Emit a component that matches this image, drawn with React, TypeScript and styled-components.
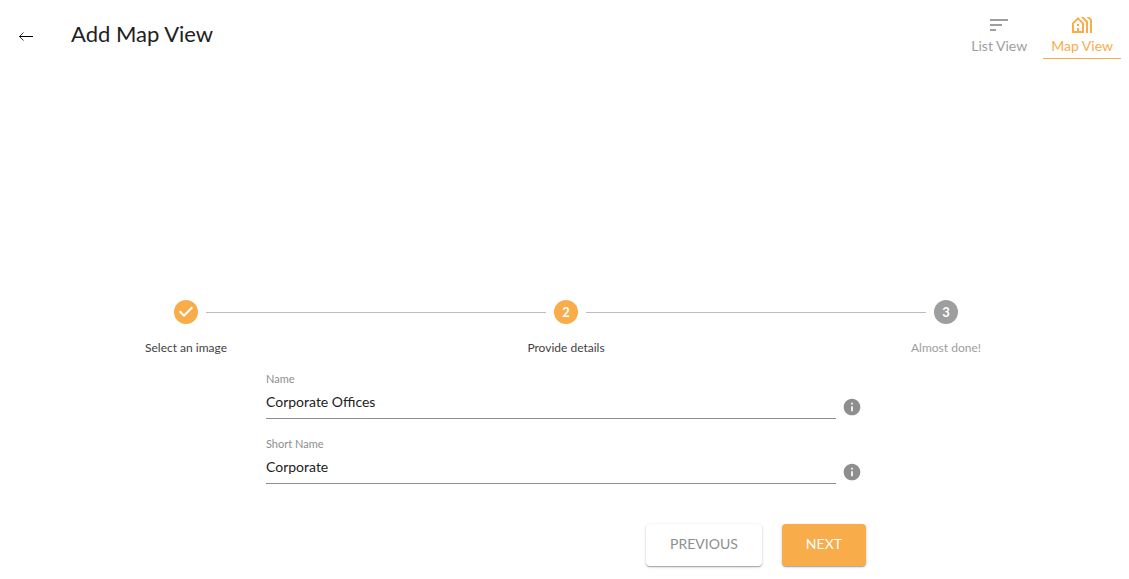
import React from 'react';
import styled, { createGlobalStyle } from 'styled-components';
import { MdSort, MdOutlineHolidayVillage, MdInfo } from 'react-icons/md';

const ORANGE = '#f9ad4a';
const GREY = '#9e9e9e';

const GlobalStyle = createGlobalStyle`
  *, *::before, *::after { box-sizing: border-box; }
  body {
    margin: 0;
    background: #fff;
    color: #212121;
    font-family: Lato, "Liberation Sans", sans-serif;
    overflow-x: hidden;
  }
  button, input { font: inherit; }
`;

const Page = styled.div`
  overflow: hidden;
`;

const Header = styled.header`
  display: flex;
  align-items: flex-start;
  height: 300px;
  padding: 8px 8px 0 8px;
`;

const BackButton = styled.button`
  display: flex;
  align-items: center;
  justify-content: center;
  width: 36px;
  height: 36px;
  margin-top: 10px;
  padding: 0;
  border: 0;
  background: none;
  color: #000;
  cursor: pointer;
`;

const Title = styled.h1`
  flex: 1;
  margin: 10px 0 0 27px;
  font-size: 22px;
  font-weight: 400;
  line-height: 32px;
  color: #212121;
`;

const Tabs = styled.nav`
  display: flex;
  gap: 8px;
`;

const Tab = styled.a<{ $active?: boolean }>`
  display: flex;
  flex-direction: column;
  align-items: center;
  height: 51px;
  padding: 5px 8px 0;
  border-bottom: 1px solid ${(p) => (p.$active ? ORANGE : 'transparent')};
  color: ${(p) => (p.$active ? ORANGE : GREY)};
  font-size: 14px;
  line-height: 18px;
  text-decoration: none;

  svg { display: block; }
`;

const Main = styled.main`
  padding-left: 3px;
`;

const Stepper = styled.ol`
  display: grid;
  grid-template-columns: repeat(3, 1fr);
  margin: 0 -7px;
  padding: 0;
  list-style: none;
`;

const Step = styled.li`
  display: flex;
  flex-direction: column;
  gap: 16px;
`;

const StepTrack = styled.div`
  display: flex;
  align-items: center;
  gap: 8px;
`;

const Connector = styled.span<{ $hidden?: boolean }>`
  flex: 1;
  height: 1px;
  background: ${(p) => (p.$hidden ? 'transparent' : '#bdbdbd')};
`;

const StepBadge = styled.span<{ $done?: boolean }>`
  display: flex;
  align-items: center;
  justify-content: center;
  width: 24px;
  height: 24px;
  border-radius: 50%;
  background: ${(p) => (p.$done ? ORANGE : GREY)};
  color: #fff;
  font-size: 13px;
  font-weight: 700;
  line-height: 24px;
`;

const StepLabel = styled.span<{ $muted?: boolean }>`
  font-size: 12px;
  line-height: 16px;
  text-align: center;
  color: ${(p) => (p.$muted ? GREY : '#424242')};
`;

const Form = styled.form`
  width: 100%;
  max-width: 600px;
  margin: 0 auto;
  padding-top: 16px;
`;

const FieldRow = styled.div`
  display: flex;
  align-items: flex-end;
  gap: 6px;
  margin-bottom: 18px;
`;

const Field = styled.div`
  display: flex;
  flex: 1;
  flex-direction: column;
`;

const Label = styled.label`
  font-size: 11px;
  line-height: 14px;
  color: #8e8e8e;
`;

const Input = styled.input`
  width: 100%;
  height: 33px;
  padding: 0 0 1px;
  border: 0;
  border-bottom: 1px solid #8e8e8e;
  border-radius: 0;
  outline: 0;
  background: none;
  color: #212121;
  font-size: 14px;
`;

const InfoButton = styled.button`
  display: flex;
  width: 24px;
  height: 20px;
  margin-bottom: 2px;
  padding: 0;
  border: 0;
  background: none;
  color: #8e8e8e;
`;

const Actions = styled.div`
  display: flex;
  justify-content: flex-end;
  gap: 20px;
  padding: 22px 0 13px;
`;

const Button = styled.button<{ $primary?: boolean }>`
  height: 42px;
  padding: 0 24px 4px;
  border: 0;
  border-radius: 4px;
  background: ${(p) => (p.$primary ? ORANGE : '#fff')};
  color: ${(p) => (p.$primary ? '#fff' : '#8e8e8e')};
  font-size: 14px;
  text-transform: uppercase;
  box-shadow: 0 1px 3px rgba(0, 0, 0, 0.2), 0 1px 1px rgba(0, 0, 0, 0.14),
    0 2px 1px -1px rgba(0, 0, 0, 0.12);
  cursor: pointer;
`;

const ArrowIcon = () => (
  <svg width="16" height="12" viewBox="0 0 16 12" fill="none" stroke="currentColor" aria-hidden="true">
    <path d="M1.5 6.5H15" />
    <path d="M5.5 2.5L1.5 6.5L5.5 10.5" strokeWidth="0.8" />
  </svg>
);

const CheckIcon = () => (
  <svg width="24" height="24" viewBox="0 0 24 24" fill="currentColor" aria-hidden="true">
    <path d="M10 17l-5-5 1.4-1.4 3.6 3.6 7.6-7.6L19 8l-9 9z" />
  </svg>
);

const steps = [
  { label: 'Select an image', state: 'done' },
  { label: 'Provide details', state: 'active' },
  { label: 'Almost done!', state: 'todo' },
];

const fields = [
  { id: 'name', label: 'Name', value: 'Corporate Offices' },
  { id: 'short-name', label: 'Short Name', value: 'Corporate' },
];

export default function App() {
  return (
    <Page>
      <GlobalStyle />
      <Header>
        <BackButton type="button" aria-label="Back">
          <ArrowIcon />
        </BackButton>
        <Title>Add Map View</Title>
        <Tabs>
          <Tab href="#list">
            <MdSort size={24} />
            List View
          </Tab>
          <Tab href="#map" $active aria-current="page">
            <MdOutlineHolidayVillage size={24} />
            Map View
          </Tab>
        </Tabs>
      </Header>
      <Main>
        <Stepper>
          {steps.map((step, i) => (
            <Step key={step.label} aria-current={step.state === 'active' ? 'step' : undefined}>
              <StepTrack>
                <Connector $hidden={i === 0} />
                <StepBadge $done={step.state !== 'todo'}>
                  {step.state === 'done' ? <CheckIcon /> : i + 1}
                </StepBadge>
                <Connector $hidden={i === steps.length - 1} />
              </StepTrack>
              <StepLabel $muted={step.state === 'todo'}>{step.label}</StepLabel>
            </Step>
          ))}
        </Stepper>
        <Form onSubmit={(e) => e.preventDefault()}>
          {fields.map((field) => (
            <FieldRow key={field.id}>
              <Field>
                <Label htmlFor={field.id}>{field.label}</Label>
                <Input id={field.id} type="text" defaultValue={field.value} />
              </Field>
              <InfoButton type="button" aria-label={`About ${field.label}`}>
                <MdInfo size={20} />
              </InfoButton>
            </FieldRow>
          ))}
          <Actions>
            <Button type="button">Previous</Button>
            <Button type="submit" $primary>
              Next
            </Button>
          </Actions>
        </Form>
      </Main>
    </Page>
  );
}
